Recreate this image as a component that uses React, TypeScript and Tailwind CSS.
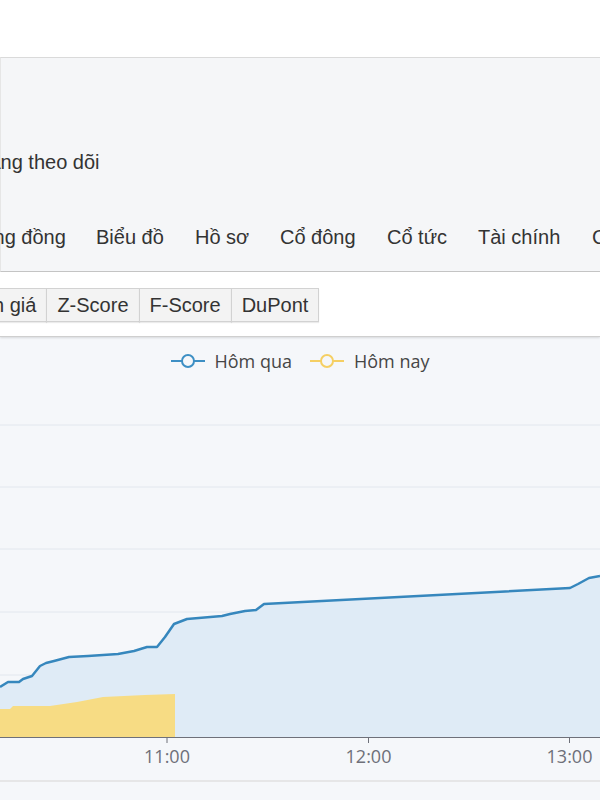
import React from "react";

const blueLine: [number, number][] = [
  [0, 688], [8, 683], [19, 683], [23, 680], [32, 677], [40, 667], [46, 664],
  [54, 662], [69, 658], [88, 657], [118, 655], [134, 652], [147, 648], [157, 648],
  [165, 638], [174, 625], [187, 620], [222, 617], [230, 615], [245, 612], [256, 611],
  [264, 605], [570, 589], [578, 585], [589, 579], [600, 577],
];

const yellowTop: [number, number][] = [
  [0, 710], [10, 710], [13, 707], [50, 707], [77, 703], [103, 698], [145, 696], [175, 695],
];

const grid = [426, 488, 550, 613, 676];
const ticks = [
  { x: 167, label: "11:00" },
  { x: 368.5, label: "12:00" },
  { x: 569.5, label: "13:00" },
];

// tab label + box width (distance to next tab)
const tabs: { label: string; w: string }[] = [
  { label: "Cộng đồng", w: "w-[128px]" },
  { label: "Biểu đồ", w: "w-[99px]" },
  { label: "Hồ sơ", w: "w-[85px]" },
  { label: "Cổ đông", w: "w-[107px]" },
  { label: "Cổ tức", w: "w-[91px]" },
  { label: "Tài chính", w: "w-[114px]" },
  { label: "Chỉ số", w: "w-[80px]" },
];
const tools = ["Định giá", "Z-Score", "F-Score", "DuPont"];

function LegendIcon({ color }: { color: string }) {
  return (
    <svg width="34" height="16" viewBox="0 0 34 16">
      <line x1="0" y1="8" x2="34" y2="8" stroke={color} strokeWidth="2" />
      <circle cx="17" cy="8" r="6" fill="#f5f7fa" stroke={color} strokeWidth="2" />
    </svg>
  );
}

export default function App() {
  const linePts = blueLine.map(([x, y]) => `${x},${y}`).join(" ");
  const areaPts = `0,738 ${linePts} 600,738`;
  const yellowPts = `0,738 ${yellowTop.map(([x, y]) => `${x},${y}`).join(" ")} 175,738`;

  return (
    <div
      className="w-[600px] h-[800px] overflow-hidden bg-white text-[#333]"
      style={{ fontFamily: '"Liberation Sans", Arial, sans-serif' }}
    >
      <div className="h-[57px] bg-white" />

      {/* stock header panel */}
      <div className="h-[215px] bg-[#f5f6f8] border-t border-b border-t-[#dadada] border-b-[#c6c6c6] border-l border-l-[#e6e6e6] flex flex-col">
        <div className="h-[92px]" />
        <div className="h-[24px] flex items-center whitespace-nowrap text-[20px] leading-none -ml-[26px]">
          Đang theo dõi
        </div>
        <div className="h-[51px]" />
        <div className="flex items-center whitespace-nowrap text-[20px] leading-none -ml-[33px] h-[24px]">
          {tabs.map((t) => (
            <span key={t.label} className={`${t.w} shrink-0`}>
              {t.label}
            </span>
          ))}
        </div>
      </div>

      {/* tool buttons */}
      <div className="h-[65px] bg-white pt-[16px] border-b border-[#cfcfcf] shadow-[0_1px_2px_rgba(0,0,0,0.12)] relative">
        <div className="flex whitespace-nowrap -ml-[48px]">
          {tools.map((t, i) => (
            <button
              key={t}
              className={`h-[34px] px-[10px] bg-[#f3f3f3] border border-[#d2d2d2] text-[20px] leading-none text-[#333] shadow-[0_1px_1px_rgba(0,0,0,0.08)] ${i > 0 ? "-ml-px" : ""}`}
            >
              {t}
            </button>
          ))}
        </div>
      </div>

      {/* chart */}
      <div className="bg-[#f5f7fa] h-[463px] flex flex-col">
        <div
          className="h-[52px] flex items-center justify-center pb-[4px] text-[18px] text-[#464646]"
          style={{ fontFamily: '"Open Sans", "Noto Sans", sans-serif' }}
        >
          <div className="flex items-center gap-[10px]">
            <LegendIcon color="#3d8fc4" />
            <span>Hôm qua</span>
          </div>
          <div className="flex items-center gap-[10px] ml-[18px]">
            <LegendIcon color="#f5cf63" />
            <span>Hôm nay</span>
          </div>
        </div>
        <svg width="600" height="410" viewBox="0 390 600 410" className="block">
          {grid.map((y) => (
            <line key={y} x1="0" y1={y} x2="600" y2={y} stroke="#e2e7ee" strokeWidth="1" />
          ))}
          <polygon points={areaPts} fill="#dfebf6" />
          <polygon points={yellowPts} fill="#f7dc84" />
          <polyline points={linePts} fill="none" stroke="#3687bd" strokeWidth="2.5" strokeLinejoin="round" />
          <line x1="0" y1="738.5" x2="600" y2="738.5" stroke="#6e7079" strokeWidth="1" />
          {ticks.map((t) => (
            <g key={t.label}>
              <line x1={t.x} y1="738" x2={t.x} y2="744" stroke="#6e7079" strokeWidth="1" />
              <text
                x={t.x}
                y="764"
                textAnchor="middle"
                fontSize="18"
                fill="#6e7079"
                fontFamily='"Open Sans", "Noto Sans", sans-serif'
              >
                {t.label}
              </text>
            </g>
          ))}
          <line x1="0" y1="782" x2="600" y2="782" stroke="#e0e0e0" strokeWidth="1.5" />
        </svg>
      </div>
    </div>
  );
}
